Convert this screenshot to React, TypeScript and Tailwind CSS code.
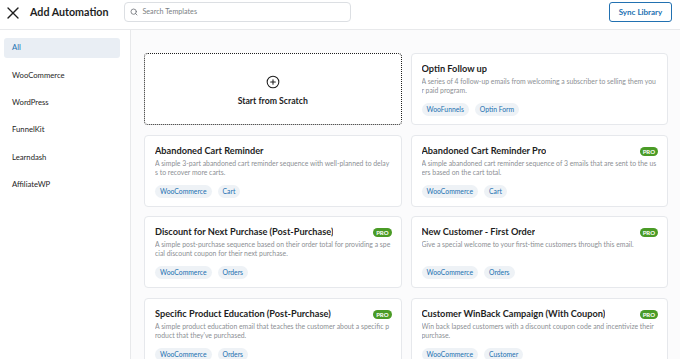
import React from 'react'
import { X, Search, CirclePlus } from 'lucide-react'

interface Template {
  title: string
  desc: string
  tags: string[]
  pro?: boolean
}

const categories = ['All', 'WooCommerce', 'WordPress', 'FunnelKit', 'Learndash', 'AffiliateWP']

const templates: Template[] = [
  {
    title: 'Optin Follow up',
    desc: 'A series of 4 follow-up emails from welcoming a subscriber to selling them your paid program.',
    tags: ['WooFunnels', 'Optin Form'],
  },
  {
    title: 'Abandoned Cart Reminder',
    desc: 'A simple 3-part abandoned cart reminder sequence with well-planned to delays to recover more carts.',
    tags: ['WooCommerce', 'Cart'],
  },
  {
    title: 'Abandoned Cart Reminder Pro',
    desc: 'A simple abandoned cart reminder sequence of 3 emails that are sent to the users based on the cart total.',
    tags: ['WooCommerce', 'Cart'],
    pro: true,
  },
  {
    title: 'Discount for Next Purchase (Post-Purchase)',
    desc: 'A simple post-purchase sequence based on their order total for providing a special discount coupon for their next purchase.',
    tags: ['WooCommerce', 'Orders'],
    pro: true,
  },
  {
    title: 'New Customer - First Order',
    desc: 'Give a special welcome to your first-time customers through this email.',
    tags: ['WooCommerce', 'Orders'],
    pro: true,
  },
  {
    title: 'Specific Product Education (Post-Purchase)',
    desc: "A simple product education email that teaches the customer about a specific product that they've purchased.",
    tags: ['WooCommerce', 'Orders'],
    pro: true,
  },
  {
    title: 'Customer WinBack Campaign (With Coupon)',
    desc: 'Win back lapsed customers with a discount coupon code and incentivize their purchase.',
    tags: ['WooCommerce', 'Customer'],
    pro: true,
  },
]

const TemplateCard = ({ t }: { t: Template }) => (
  <div className="h-[72px] bg-white border border-[#e6e8ec] rounded-[4px] pl-[10px] pr-[9px] pt-[8px] flex flex-col">
    <div className="flex items-start justify-between gap-2">
      <h3 className="text-[9.2px] leading-[14px] font-bold text-[#1e1e1e] whitespace-nowrap overflow-hidden">
        {t.title}
      </h3>
      {t.pro && (
        <span className="shrink-0 mt-[3px] h-[9px] px-[3px] rounded-full bg-[#4a9b26] text-white text-[6px] leading-[9px] font-bold">
          PRO
        </span>
      )}
    </div>
    <p className="mt-[1px] text-[6.85px] leading-[9.4px] text-[#8c8f94] break-all h-[19px] overflow-hidden">
      {t.desc}
    </p>
    <div className="mt-[7px] flex gap-[6px]">
      {t.tags.map((tag) => (
        <span
          key={tag}
          className="h-[13px] px-[5px] rounded-full bg-[#eef2f6] text-[#2271b1] text-[6.8px] leading-[13px]"
        >
          {tag}
        </span>
      ))}
    </div>
  </div>
)

export default function App() {
  return (
    <div className="w-[680px] h-[359px] overflow-hidden flex flex-col bg-white font-['Lato',sans-serif]">
      {/* Header */}
      <header className="h-[30px] shrink-0 flex items-center border-b border-[#e8e9eb] pl-[3px] pr-[8px]">
        <X className="w-[20px] h-[20px] text-[#1e1e1e] mb-[4px]" strokeWidth={1.6} />
        <h1 className="ml-[7px] mb-[4px] text-[10.7px] font-bold text-[#1e1e1e]">Add Automation</h1>
        <div className="ml-[16px] w-[227px] h-[20px] mb-[5px] flex items-center border border-[#dcdfe3] rounded-[4px] px-[5px]">
          <Search className="w-[8px] h-[8px] text-[#6b6f75]" strokeWidth={2.4} />
          <span className="ml-[4px] text-[7.2px] text-[#7b7f85]">Search Templates</span>
        </div>
        <button className="ml-auto mb-[5px] h-[20px] w-[63px] border border-[#2271b1] rounded-[3px] text-[8px] font-bold text-[#2271b1]">
          Sync Library
        </button>
      </header>

      <div className="flex flex-1 min-h-0">
        {/* Sidebar */}
        <aside className="w-[131px] shrink-0 border-r border-[#e8e9eb] pt-[8px] pl-[4px] pr-[10px] flex flex-col gap-[7.4px]">
          {categories.map((c, i) => (
            <div
              key={c}
              className={`h-[20px] flex items-center pl-[8px] rounded-[3px] text-[7.7px] ${
                i === 0 ? 'bg-[#e9eef4] text-[#2271b1]' : 'text-[#1e1e1e]'
              }`}
            >
              {c}
            </div>
          ))}
        </aside>

        {/* Templates grid */}
        <main className="flex-1 bg-[#fbfbfc] pt-[23px] pl-[13px] pr-[12px] overflow-hidden">
          <div className="grid grid-cols-2 gap-x-[9px] gap-y-[9.5px]">
            <div className="h-[72px] border-[1.5px] border-dotted border-[#1e1e1e] rounded-[4px] bg-white flex flex-col items-center justify-center">
              <CirclePlus className="w-[14px] h-[14px] text-[#1e1e1e] mt-[4px]" strokeWidth={1.8} />
              <span className="mt-[5px] text-[8.7px] font-bold text-[#1e1e1e]">Start from Scratch</span>
            </div>
            {templates.map((t) => (
              <TemplateCard key={t.title} t={t} />
            ))}
          </div>
        </main>
      </div>
    </div>
  )
}
